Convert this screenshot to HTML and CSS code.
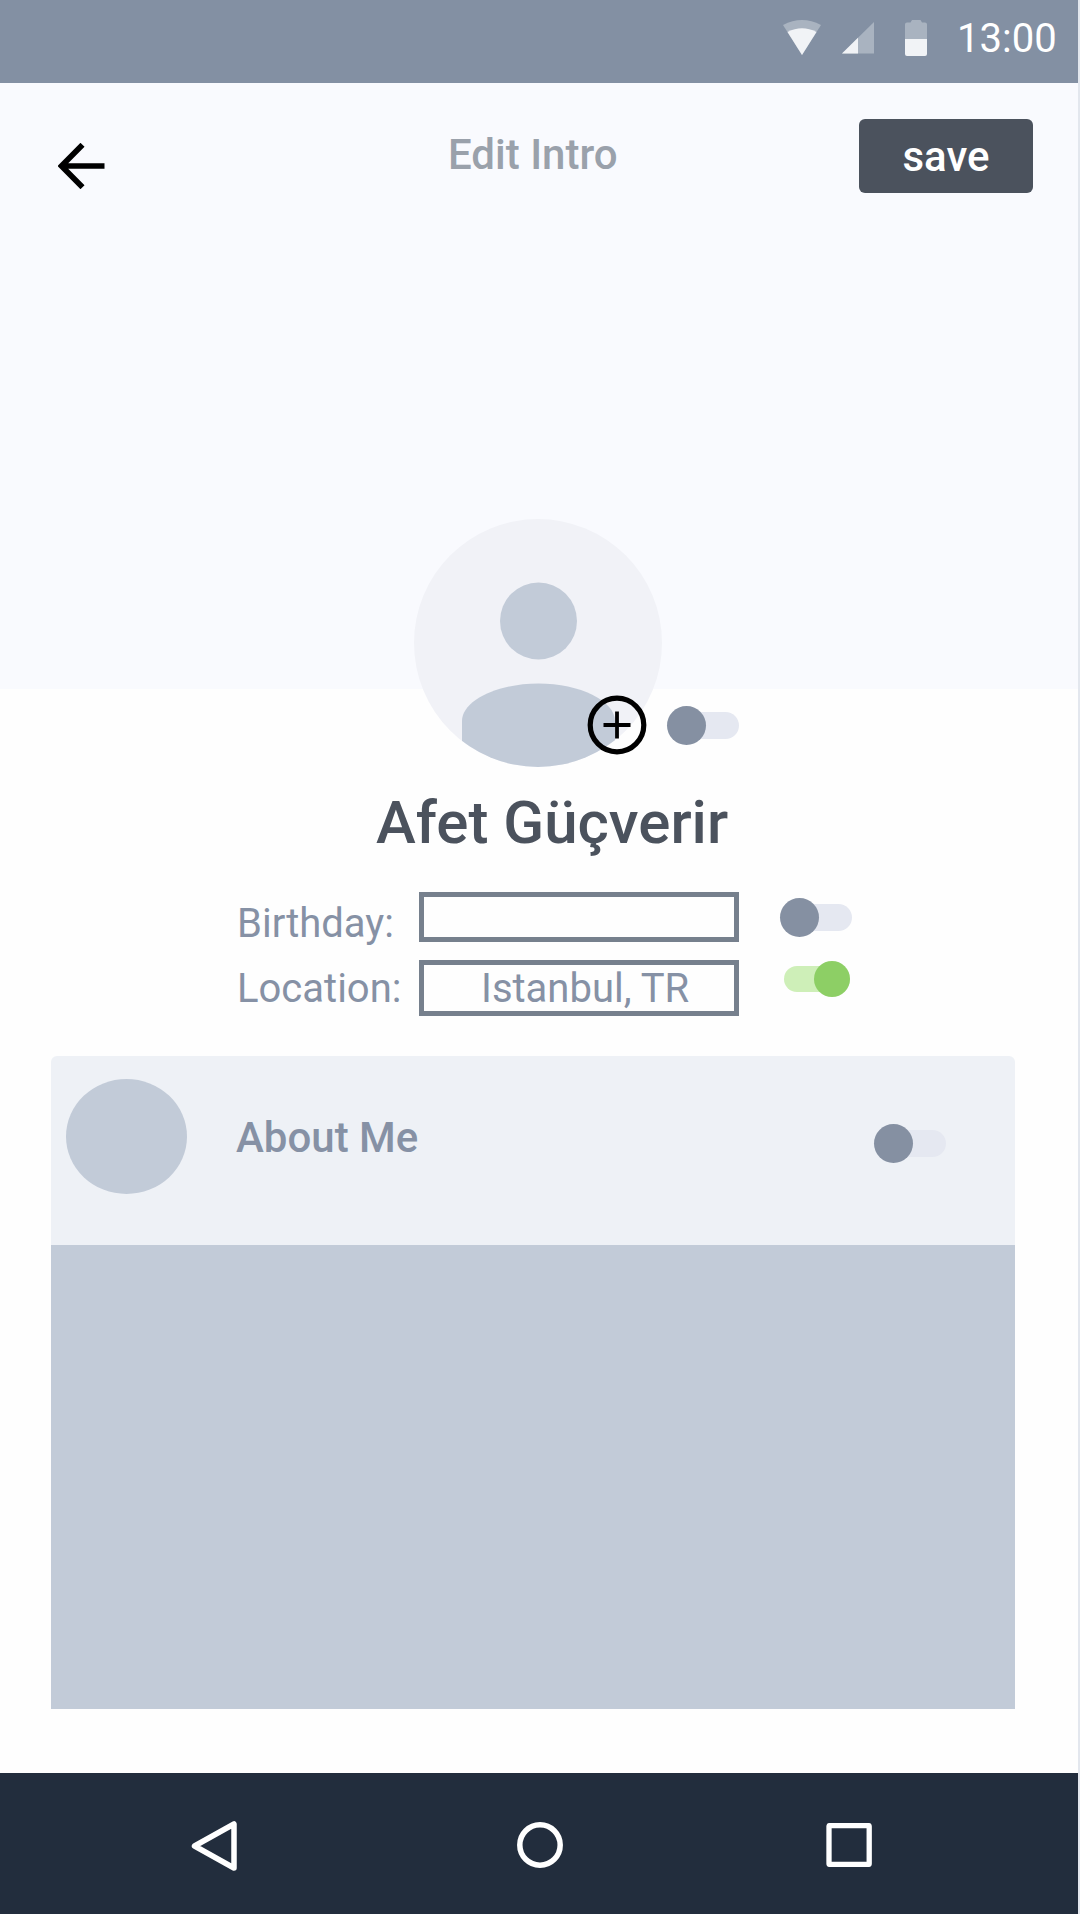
FILE: index.html
```html
<!DOCTYPE html>
<html lang="en">
<head>
<meta charset="utf-8">
<title>Edit Intro</title>
<link rel="stylesheet" href="styles.css">
</head>
<body>
<div class="screen">
  <div class="status-bar">
    <svg class="status-icon wifi" width="38" height="35" viewBox="0 0 38 35"><path d="M0 5Q19-5 38 5L19 35Z" fill="#a9b3c0"/><path d="M4.500 12Q19 4.500 33.500 12L19 35Z" fill="#f1f3f6"/></svg>
    <svg class="status-icon signal" width="32" height="32" viewBox="0 0 32 32"><path d="M0 31.500L32 0V31.500Z" fill="#a9b3c0"/><path d="M0 31.500L16 15.700V31.500Z" fill="#f1f3f6"/></svg>
    <svg class="status-icon battery" width="22" height="36" viewBox="0 0 22 36"><path d="M0 19V4.500Q0 2.500 2 2.500H5.500L7 0H15.500L17 2.500H20Q22 2.500 22 4.500V19Z" fill="#a9b3c0"/><path d="M0 19H22V34Q22 36 20 36H2Q0 36 0 34Z" fill="#f1f3f6"/></svg>
    <span class="clock">13:00</span>
  </div>

  <header class="hero">
    <a class="back" aria-label="Back"><svg width="48" height="46" viewBox="0 0 48 46"><path d="M24.500 1.800L3.500 23L24.500 44.200M3.500 23H46.500" fill="none" stroke="#000" stroke-width="5.700"/></svg></a>
    <h1 class="title">Edit Intro</h1>
    <button class="save">save</button>
  </header>

  <section class="profile">
    <div class="avatar">
      <svg width="248" height="248" viewBox="0 0 248 248">
        <defs><clipPath id="face"><rect width="248" height="248" rx="124"/></clipPath></defs>
        <g clip-path="url(#face)">
          <rect width="248" height="248" fill="#f1f2f7"/>
          <circle cx="124.500" cy="102" r="38.500" fill="#c2cbd8"/>
          <path d="M48 248V202C48 182 83 164.500 124.500 164.500S201 182 201 202V248Z" fill="#c2cbd8"/>
        </g>
      </svg>
      <svg class="add" width="60" height="60" viewBox="0 0 60 60" fill="none" stroke="#000"><circle cx="30" cy="30" r="26.800" stroke-width="5.200"/><path d="M16.500 30H43.500M30 16.500V43.500" stroke-width="3.800"/></svg>
    </div>
    <span class="switch"></span>
  </section>

  <h2 class="name">Afet Güçverir</h2>

  <div class="fields">
    <div class="field birthday">
      <span class="label">Birthday:</span>
      <span class="input"></span>
      <span class="switch"></span>
    </div>
    <div class="field location">
      <span class="label">Location:</span>
      <span class="input">Istanbul, TR</span>
      <span class="switch on"></span>
    </div>
  </div>

  <section class="card">
    <div class="card-head">
      <span class="dot"></span>
      <h3 class="card-title">About Me</h3>
      <span class="switch"></span>
    </div>
    <div class="card-body"></div>
  </section>

  <nav class="nav-bar">
    <svg class="nav-back" width="46" height="54" viewBox="0 0 46 54"><path d="M43 5V49L3.500 27Z" fill="none" stroke="#fff" stroke-width="5.500" stroke-linejoin="round"/></svg>
    <svg class="nav-home" width="46" height="46" viewBox="0 0 46 46"><circle cx="23" cy="23" r="20.200" fill="none" stroke="#fff" stroke-width="5.500"/></svg>
    <svg class="nav-recent" width="46" height="44" viewBox="0 0 46 44"><rect x="3" y="2.600" width="40.200" height="38.800" rx="1" fill="none" stroke="#fff" stroke-width="5.300"/></svg>
  </nav>
</div>
</body>
</html>
```
FILE: styles.css
```css
* { box-sizing: border-box; }

body {
  margin: 0;
  background: #e3e7ee;
  font-family: Roboto, "Liberation Sans", sans-serif;
  color: #8691a5;
}

h1, h2, h3 { margin: 0; font-weight: 500; }
svg { display: block; }

.screen {
  display: flex;
  flex-direction: column;
  width: 1078px;
  height: 1914px;
  background: #fefefe;
}

.status-bar {
  display: flex;
  align-items: flex-start;
  justify-content: flex-end;
  height: 83px;
  padding: 20px 20px 0 0;
  background: #8390a3;
}
.wifi { margin-right: 21px; }
.signal { margin: 2px 31px 0 0; }
.battery { margin-right: 30px; }
.clock {
  width: 101px;
  margin-top: -1px;
  font-size: 40px;
  line-height: 40px;
  color: #fff;
}

.hero {
  display: flex;
  align-items: flex-start;
  height: 606px;
  padding: 36px 45px 0 58px;
  background: #f9fafe;
}
.back { margin-top: 24px; }
.title {
  width: 411px;
  margin: 14px 0 0 342px;
  font-size: 42px;
  line-height: 43px;
  color: #9aa1ab;
}
.save {
  width: 174px;
  height: 74px;
  padding: 2px 0 0;
  border: 0;
  border-radius: 6px;
  background: #4b525d;
  color: #fff;
  font: 500 42px/72px Roboto, "Liberation Sans", sans-serif;
}

.switch {
  display: flex;
  align-items: center;
  width: 66px;
  height: 27px;
  margin-left: 6px;
  border-radius: 14px;
  background: #e5e8f1;
}
.switch::before {
  content: "";
  flex: none;
  width: 39px;
  height: 39px;
  margin-left: -6px;
  border-radius: 50%;
  background: #8590a2;
}
.switch.on {
  justify-content: flex-end;
  height: 26px;
  background: #ceefb8;
}
.switch.on::before {
  width: 36px;
  height: 36px;
  margin: 0;
  background: #8dcf65;
}

.profile {
  display: flex;
  height: 248px;
  margin: -170px 0 0 414px;
}
.avatar { position: relative; }
.add {
  position: absolute;
  left: 173px;
  top: 176px;
}
.profile .switch { margin: 193px 0 0 11px; }

.name {
  margin: 22px 0 0 376px;
  font-size: 60px;
  line-height: 68px;
  color: #4b525d;
}

.fields {
  display: flex;
  flex-direction: column;
  gap: 18px;
  margin: 35px 0 0 237px;
  font-size: 40px;
}
.field {
  display: grid;
  grid-template-columns: 182px 320px auto;
  justify-content: start;
}
.birthday { grid-template-rows: 50px; }
.location { grid-template-rows: 56px; }
.label { line-height: 64px; }
.location .label { line-height: 58px; }
.input {
  border: 5px solid #76808d;
  padding-left: 57px;
  line-height: 48px;
}
.field .switch { margin: 12px 0 0 47px; }
.field .switch.on { margin: 6px 0 0 45px; }

.card {
  width: 964px;
  margin: 40px 0 0 51px;
}
.card-head {
  display: flex;
  align-items: flex-start;
  height: 189px;
  padding: 23px 69px 0 15px;
  border-radius: 6px 6px 0 0;
  background: #eef1f6;
}
.dot {
  width: 121px;
  height: 115px;
  border-radius: 50%;
  background: #c2cbd8;
}
.card-title {
  margin: 34px 0 0 49px;
  font-size: 42px;
  line-height: 50px;
}
.card-head .switch { margin: 51px 0 0 auto; }
.card-body {
  height: 464px;
  background: #c2cbd8;
}

.nav-bar {
  display: flex;
  align-items: flex-start;
  height: 141px;
  margin-top: 64px;
  padding: 46px 0 0 191px;
  background: #222d3d;
}
.nav-home { margin: 3px 0 0 280px; }
.nav-recent { margin: 4px 0 0 263px; }
```
